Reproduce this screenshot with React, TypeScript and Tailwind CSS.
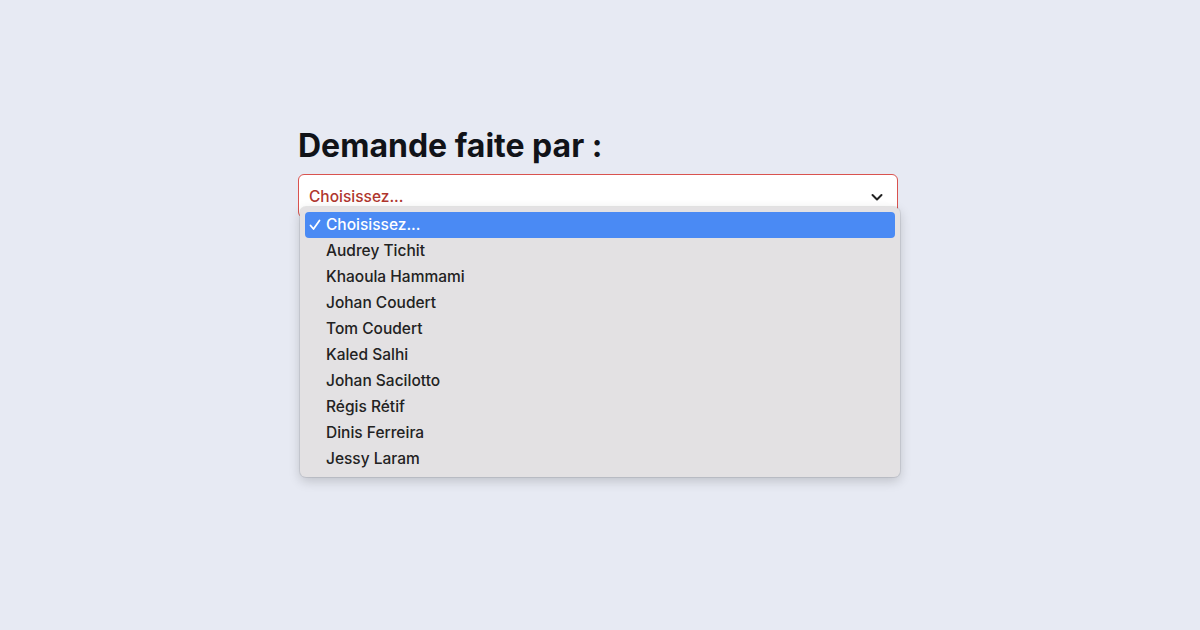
import React from 'react';

const people = [
  'Audrey Tichit',
  'Khaoula Hammami',
  'Johan Coudert',
  'Tom Coudert',
  'Kaled Salhi',
  'Johan Sacilotto',
  'Régis Rétif',
  'Dinis Ferreira',
  'Jessy Laram',
];

export default function App() {
  return (
    <div className="w-[1200px] h-[630px] bg-[#e7eaf3] flex justify-center font-['Inter',sans-serif]">
      <div className="w-[600px] mr-[4px] pt-[126px]">
        <h1 className="text-[32px] leading-[40px] font-bold text-[#111318]">
          Demande faite par :
        </h1>
        <div className="relative mt-[8px]">
          {/* Select */}
          <div className="h-[44px] bg-white border border-[#d9534f] rounded-[6px] flex items-center justify-between pl-[10px] pr-[13px] pt-[1px]">
            <span className="text-[15.5px] font-medium text-[#b0362e]">Choisissez...</span>
            <svg width="14" height="14" viewBox="0 0 14 14" fill="none">
              <path d="M2.5 5l4.5 4.5L11.5 5" stroke="#222" strokeWidth="2" strokeLinecap="round" strokeLinejoin="round" />
            </svg>
          </div>

          {/* Open list */}
          <div className="absolute left-[2px] top-[33px] w-[600px] bg-[#e3e1e3] rounded-[6px] p-[5px] shadow-[0_4px_12px_rgba(0,0,0,0.18),0_0_0_1px_rgba(0,0,0,0.08)]">
            <div className="h-[26px] bg-[#4a8af4] rounded-[4px] flex items-center text-white text-[15.5px] font-medium">
              <span className="w-[21px] pl-[4px] flex items-center">
                <svg width="12" height="12" viewBox="0 0 12 12" fill="none">
                  <path d="M1.5 6.5l3 3.5L10.5 1.5" stroke="#fff" strokeWidth="1.8" strokeLinecap="round" strokeLinejoin="round" />
                </svg>
              </span>
              <span>Choisissez...</span>
            </div>
            {people.map((name) => (
              <div key={name} className="h-[26px] flex items-center pl-[21px] text-[15.5px] font-medium text-[#222]">
                {name}
              </div>
            ))}
          </div>
        </div>
      </div>
    </div>
  );
}
